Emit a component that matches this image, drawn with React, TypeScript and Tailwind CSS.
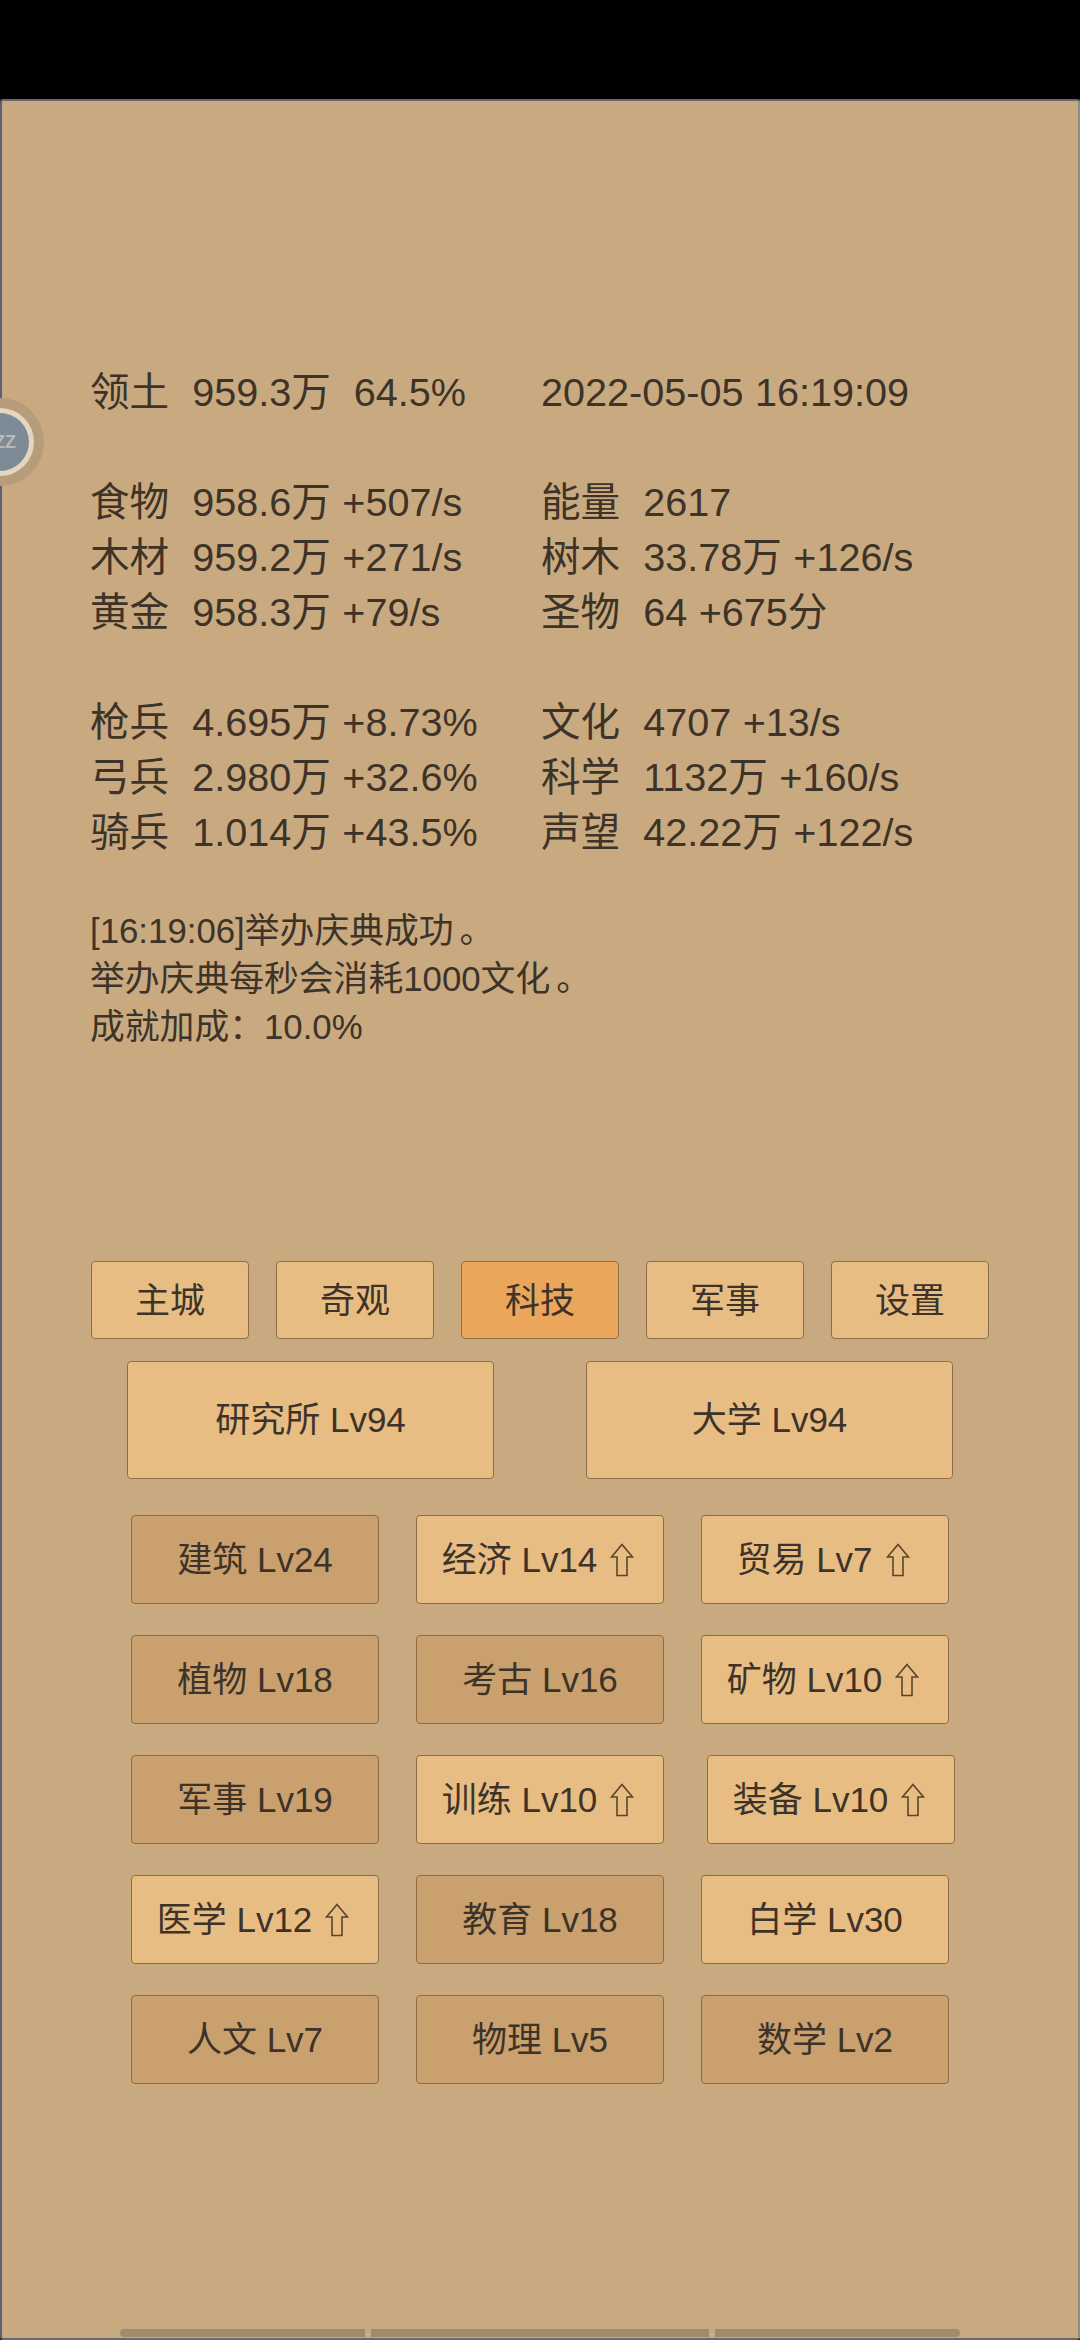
const left = [
  ["领土  959.3万  64.5%", "2022-05-05 16:19:09"],
  ["", ""],
  ["食物  958.6万 +507/s", "能量  2617"],
  ["木材  959.2万 +271/s", "树木  33.78万 +126/s"],
  ["黄金  958.3万 +79/s", "圣物  64 +675分"],
  ["", ""],
  ["枪兵  4.695万 +8.73%", "文化  4707 +13/s"],
  ["弓兵  2.980万 +32.6%", "科学  1132万 +160/s"],
  ["骑兵  1.014万 +43.5%", "声望  42.22万 +122/s"],
];

const tabs = [
  { t: "主城", active: false },
  { t: "奇观", active: false },
  { t: "科技", active: true },
  { t: "军事", active: false },
  { t: "设置", active: false },
];

type Tech = { t: string; up?: boolean; dim?: boolean };
const rows: { items: Tech[]; shift?: boolean }[] = [
  { items: [{ t: "建筑 Lv24", dim: true }, { t: "经济 Lv14", up: true }, { t: "贸易 Lv7", up: true }] },
  { items: [{ t: "植物 Lv18", dim: true }, { t: "考古 Lv16", dim: true }, { t: "矿物 Lv10", up: true }] },
  { items: [{ t: "军事 Lv19", dim: true }, { t: "训练 Lv10", up: true }, { t: "装备 Lv10", up: true }], shift: true },
  { items: [{ t: "医学 Lv12", up: true }, { t: "教育 Lv18", dim: true }, { t: "白学 Lv30" }] },
  { items: [{ t: "人文 Lv7", dim: true }, { t: "物理 Lv5", dim: true }, { t: "数学 Lv2", dim: true }] },
];

function UpArrow() {
  return (
    <svg width="24" height="34" viewBox="0 0 24 34" className="ml-[13px] mr-[4px] shrink-0" fill="none" stroke="#5a452c" strokeWidth="1.6" strokeLinejoin="miter">
      <path d="M12 1.5 L22.5 14 H17 V32.5 H7 V14 H1.5 Z" />
    </svg>
  );
}

export default function App() {
  return (
    <div
      className="w-[1080px] h-[2340px] bg-black flex flex-col text-[#3d3328] overflow-hidden"
      style={{ fontFamily: '"Liberation Sans", "Noto Sans CJK SC", sans-serif' }}
    >
      <div className="h-[99px] shrink-0" />
      <div className="relative flex-1 bg-[#c9aa80] border-t-2 border-l-2 border-r-2 border-b-2 border-t-[#6b6670] border-l-[#5f5f78] border-r-[#8f8c8c] border-b-[#6b6670] rounded-[3px] flex flex-col">
        <div className="absolute left-[-2px] top-[297px] w-[44px] h-[88px] overflow-hidden">
          <div className="absolute left-[-44px] top-0 w-[88px] h-[88px] rounded-full bg-[#b59d7b] flex items-center justify-center">
            <div className="w-[68px] h-[68px] rounded-full bg-[#e6d6bf] flex items-center justify-center">
              <div className="w-[58px] h-[58px] rounded-full bg-[#7d8b96] flex items-center justify-end pr-[13px]">
                <span className="text-[18px] leading-none text-[#b9bab4] font-bold">ZZ</span>
              </div>
            </div>
          </div>
        </div>

        <div className="pl-[88px] pt-[264px] text-[39.6px] leading-[55px] [word-spacing:0.5px]">
          {left.map((r, i) => (
            <div key={i} className="flex h-[55px] whitespace-pre">
              <div className="w-[451px]">{r[0]}</div>
              <div>{r[1]}</div>
            </div>
          ))}
        </div>

        <div className="pl-[88px] mt-[47px] text-[34.8px] leading-[48px]">
          <div>[16:19:06]举办庆典成功<span className="ml-[6px]">。</span></div>
          <div>举办庆典每秒会消耗1000文化<span className="ml-[6px]">。</span></div>
          <div>成就加成：10.0%</div>
        </div>

        <div className="flex gap-[27px] pl-[89px] mt-[210px]">
          {tabs.map((b) => (
            <div
              key={b.t}
              className={`w-[158px] h-[78px] pt-[2px] flex items-center justify-center rounded-[4px] border border-[#8c6d47] text-[35px] ${b.active ? "bg-[#eba65c]" : "bg-[#e8bd84]"}`}
            >
              {b.t}
            </div>
          ))}
        </div>

        <div className="flex gap-[92px] pl-[125px] mt-[22px]">
          {["研究所 Lv94", "大学 Lv94"].map((t) => (
            <div key={t} className="w-[367px] h-[118px] flex items-center justify-center rounded-[4px] border border-[#8c6d47] bg-[#e8bd84] text-[35px]">
              {t}
            </div>
          ))}
        </div>

        <div className="flex flex-col gap-[31px] pl-[129px] mt-[36px]">
          {rows.map((row, i) => (
            <div key={i} className="flex">
              {row.items.map((b, j) => (
                <div
                  key={b.t}
                  className={`w-[248px] h-[89px] pt-[1px] flex items-center justify-center rounded-[4px] border border-[#8c6d47] text-[35px] ${b.dim ? "bg-[#c9a06e]" : "bg-[#e8bd84]"} ${j === 0 ? "" : row.shift && j === 2 ? "ml-[43px]" : "ml-[37px]"}`}
                >
                  <span>{b.t}</span>
                  {b.up && <UpArrow />}
                </div>
              ))}
            </div>
          ))}
        </div>

        <div className="mt-auto flex gap-[6px] pl-[118px] pb-[1px]">
          <div className="w-[245px] h-[8px] rounded-l-[4px] bg-[#a08b6c]" />
          <div className="w-[338px] h-[8px] bg-[#a08b6c]" />
          <div className="w-[245px] h-[8px] rounded-r-[4px] bg-[#a08b6c]" />
        </div>
      </div>
    </div>
  );
}
